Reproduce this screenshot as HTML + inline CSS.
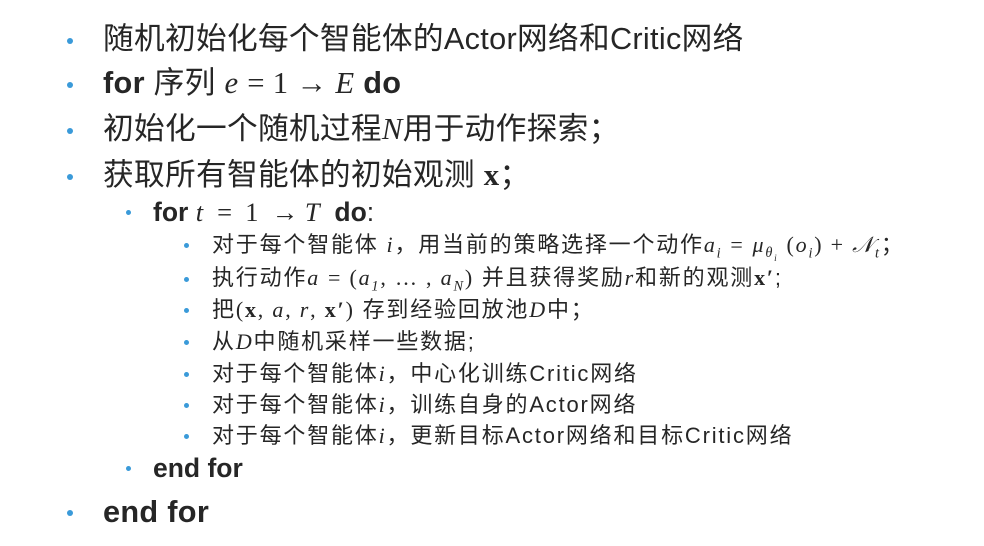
<!DOCTYPE html><html><head><meta charset="utf-8"><style>
body{margin:0;width:984px;height:546px;background:#fff;position:relative;overflow:hidden;font-family:"Liberation Sans","Noto Sans CJK SC",sans-serif;color:#262626}
.l{position:absolute;white-space:nowrap;line-height:1}
.b{position:absolute;border-radius:50%;background:#3a9ad9}
.m{font-family:"Liberation Serif","Noto Serif CJK SC",serif;font-style:italic}
.n{font-family:"Liberation Serif",serif}
.l1{font-size:30.7px;letter-spacing:0.3px}.l2{font-size:26.5px}.l3{font-size:22px;letter-spacing:1.8px}
sub{font-size:0.65em}
</style></head><body>
<div class="b" style="left:67px;top:38px;width:6px;height:6px"></div>
<div class="l l1" style="left:103px;top:24px">随机初始化每个智能体的Actor网络和Critic网络</div>
<div class="b" style="left:67px;top:82px;width:6px;height:6px"></div>
<div class="l l1" style="left:103px;top:68px"><b>for</b> 序列 <span class="m">e</span> <span class="n">= 1 → </span><span class="m">E</span> <b>do</b></div>
<div class="b" style="left:67px;top:128px;width:6px;height:6px"></div>
<div class="l l1" style="left:103px;top:114px">初始化一个随机过程<span class="m">N</span>用于动作探索；</div>
<div class="b" style="left:67px;top:174px;width:6px;height:6px"></div>
<div class="l l1" style="left:103px;top:160px">获取所有智能体的初始观测 <b class="n">x</b>；</div>
<div class="b" style="left:126px;top:210px;width:5px;height:5px"></div>
<div class="l l2" style="left:153px;top:199px"><b>for</b> <span class="m">t</span> <span class="n">&nbsp;= &nbsp;1 &nbsp;→ </span><span class="m">T</span>&nbsp; <b>do</b>:</div>
<div class="b" style="left:184px;top:243px;width:5px;height:5px"></div>
<div class="l l3" style="left:212px;top:234px">对于每个智能体 <span class="m">i</span>，用当前的策略选择一个动作<span class="m">a<sub>i</sub></span> <span class="n">=</span> <span class="m">μ<sub>θ<sub>i</sub></sub></span> <span class="n">(</span><span class="m">o<sub>i</sub></span><span class="n">) + </span><span class="m">𝒩<sub>t</sub></span>；</div>
<div class="b" style="left:184px;top:277px;width:5px;height:5px"></div>
<div class="l l3" style="left:212px;top:267px">执行动作<span class="m">a</span> <span class="n">= (</span><span class="m">a<sub>1</sub></span><span class="n">, … , </span><span class="m">a<sub>N</sub></span><span class="n">)</span> 并且获得奖励<span class="m">r</span>和新的观测<b class="n">x′</b>;</div>
<div class="b" style="left:184px;top:308px;width:5px;height:5px"></div>
<div class="l l3" style="left:212px;top:299px">把<span class="n">(<b>x</b>, </span><span class="m">a</span><span class="n">, </span><span class="m">r</span><span class="n">, <b>x′</b>)</span> 存到经验回放池<span class="m">D</span>中；</div>
<div class="b" style="left:184px;top:340px;width:5px;height:5px"></div>
<div class="l l3" style="left:212px;top:331px">从<span class="m">D</span>中随机采样一些数据;</div>
<div class="b" style="left:184px;top:372px;width:5px;height:5px"></div>
<div class="l l3" style="left:212px;top:363px">对于每个智能体<span class="m">i</span>，中心化训练Critic网络</div>
<div class="b" style="left:184px;top:403px;width:5px;height:5px"></div>
<div class="l l3" style="left:212px;top:394px">对于每个智能体<span class="m">i</span>，训练自身的Actor网络</div>
<div class="b" style="left:184px;top:434px;width:5px;height:5px"></div>
<div class="l l3" style="left:212px;top:425px">对于每个智能体<span class="m">i</span>，更新目标Actor网络和目标Critic网络</div>
<div class="b" style="left:126px;top:466px;width:5px;height:5px"></div>
<div class="l l2" style="left:153px;top:455px"><b>end for</b></div>
<div class="b" style="left:67px;top:510px;width:6px;height:6px"></div>
<div class="l l1" style="left:103px;top:497px"><b>end for</b></div>
</body></html>
